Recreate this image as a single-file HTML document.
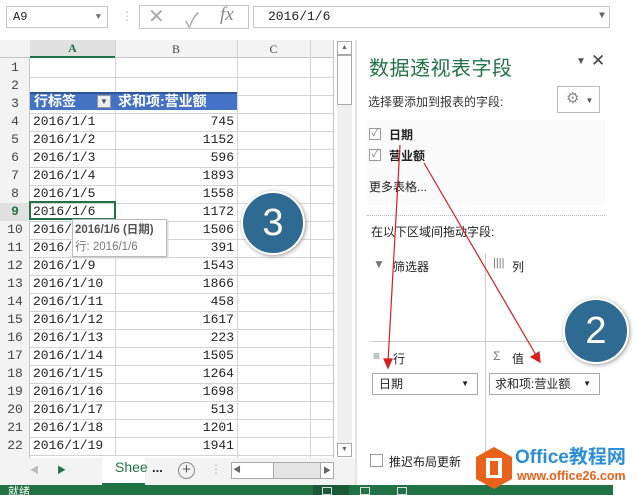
<!DOCTYPE html><html><head><meta charset="utf-8"><style>
*{margin:0;padding:0;box-sizing:border-box}
body{width:637px;height:495px;overflow:hidden;background:#fff;position:relative;font-family:"Liberation Sans","Noto Sans CJK SC",sans-serif;font-size:12px;color:#222}
.a{position:absolute;white-space:nowrap}
.cell{position:absolute;height:18px;line-height:18px;font-family:"Liberation Mono","Noto Sans CJK SC",monospace;font-size:13px;white-space:nowrap}
.hl{position:absolute;left:30px;width:303px;height:1px;background:#d4d4d4}
.vl{position:absolute;top:40px;width:1px;height:418px;background:#d4d4d4}
</style></head><body>
<div class="a" style="left:6px;top:6px;width:102px;height:22px;border:1px solid #c6c6c6;font-family:'Liberation Mono',monospace;font-size:12px;line-height:20px;padding-left:6px">A9<span style="position:absolute;right:6px;top:0;color:#777;font-size:9px">▼</span></div>
<div class="a" style="left:121px;top:9px;color:#bbb;font-size:12px">⋮</div>
<div class="a" style="left:139px;top:5px;width:110px;height:24px;border:1px solid #c6c6c6"></div>
<div class="a" style="left:148px;top:4px;color:#aaa;font-size:20px">✕</div>
<div class="a" style="left:185px;top:4px;color:#aaa;font-size:20px">✓</div>
<div class="a" style="left:220px;top:4px;color:#888;font-size:19px;font-style:italic;font-family:'Liberation Serif',serif">fx</div>
<div class="a" style="left:253px;top:6px;width:357px;height:22px;border:1px solid #c6c6c6;font-family:'Liberation Mono',monospace;font-size:13px;line-height:20px;padding-left:14px">2016/1/6<span style="position:absolute;right:4px;top:0;color:#666;font-size:10px">▼</span></div>
<div class="a" style="left:0;top:40px;width:333px;height:18px;background:#f3f3f3;border-bottom:1px solid #c6c6c6"></div>
<div class="a" style="left:30px;top:40px;width:85px;height:18px;background:#e1e1e1;border-bottom:2px solid #217346;text-align:center;line-height:17px;font-family:'Liberation Serif',serif;color:#217346;font-weight:bold">A</div>
<div class="a" style="left:115px;top:40px;width:122px;height:18px;text-align:center;line-height:18px;font-family:'Liberation Serif',serif;color:#444">B</div>
<div class="a" style="left:237px;top:40px;width:73px;height:18px;text-align:center;line-height:18px;font-family:'Liberation Serif',serif;color:#444">C</div>
<div class="a" style="left:0;top:58px;width:30px;height:400px;background:#f3f3f3;border-right:1px solid #c6c6c6"></div>
<div class="a" style="left:333px;top:40px;width:1px;height:418px;background:#c6c6c6"></div>
<div class="vl" style="left:115px"></div><div class="vl" style="left:237px"></div><div class="vl" style="left:310px"></div>
<div id="g"></div>
<div class="a" style="left:30px;top:92px;width:207px;height:18px;background:#4472c4;border-top:2px solid #2f5597"></div>
<div class="a" style="left:34px;top:92px;color:#fff;font-size:14px;font-weight:bold;line-height:18px">行标签</div>
<div class="a" style="left:97px;top:95px;width:14px;height:13px;background:#eee;border:1px solid #999;font-size:8px;text-align:center;line-height:11px;color:#555">▼</div>
<div class="a" style="left:118px;top:92px;color:#fff;font-size:14px;font-weight:bold;line-height:18px">求和项:营业额</div>
<div class="a" style="left:29px;top:201px;width:87px;height:19px;border:2px solid #217346"></div>
<div class="a" style="left:72px;top:219px;width:95px;height:38px;background:#fff;border:1px solid #bbb;box-shadow:1px 1px 2px #ccc;font-size:11.5px;padding:2px 0 0 2px;line-height:17px"><b style="color:#555">2016/1/6 (日期)</b><br><span style="color:#777">行: 2016/1/6</span></div>
<div class="a" style="left:241px;top:191px;width:64px;height:64px;border-radius:50%;background:#2e6a92;border:2px solid #fff;box-shadow:1px 1px 4px #999;color:#fff;font-size:38px;text-align:center;line-height:60px">3</div>
<div class="a" style="left:337px;top:41px;width:15px;height:402px;background:#f0f0f0"></div>
<div class="a" style="left:337px;top:41px;width:15px;height:14px;border:1px solid #aaa;background:#fff;font-size:7px;text-align:center;color:#666;line-height:12px">▲</div>
<div class="a" style="left:337px;top:55px;width:15px;height:50px;border:1px solid #aaa;background:#fff"></div>
<div class="a" style="left:337px;top:443px;width:15px;height:14px;border:1px solid #aaa;background:#fff;font-size:7px;text-align:center;color:#666;line-height:12px">▼</div>
<div class="a" style="left:0;top:458px;width:355px;height:27px;background:#f3f3f3"></div>
<div class="a" style="left:30px;top:463px;color:#bbb;font-size:9px">◀</div>
<div class="a" style="left:57px;top:463px;color:#217346;font-size:9px">▶</div>
<div class="a" style="left:102px;top:456px;width:43px;height:29px;background:#fff;border-bottom:2px solid #217346;color:#217346;font-size:14px;padding:3px 0 0 13px">Shee</div>
<div class="a" style="left:152px;top:460px;font-weight:bold;font-size:13px">...</div>
<div class="a" style="left:178px;top:462px;width:17px;height:17px;border:1px solid #888;border-radius:50%;text-align:center;line-height:14px;color:#555;font-size:15px">+</div>
<div class="a" style="left:210px;top:462px;color:#bbb">⋮</div>
<div class="a" style="left:231px;top:462px;width:43px;height:17px;background:#fff;border:1px solid #aaa"></div>
<div class="a" style="left:233px;top:464px;color:#666;font-size:8px">◀</div>
<div class="a" style="left:274px;top:462px;width:48px;height:17px;background:#e4e4e4;border-top:1px solid #aaa;border-bottom:1px solid #aaa"></div>
<div class="a" style="left:320px;top:462px;width:14px;height:17px;background:#fff;border:1px solid #aaa;color:#666;font-size:8px;text-align:center;line-height:15px">▶</div>
<div class="a" style="left:0;top:485px;width:613px;height:10px;background:#217346;overflow:hidden"><span style="position:absolute;left:8px;top:-2px;color:#fff;font-size:11px">就绪</span><div style="position:absolute;left:313px;top:0;width:36px;height:10px;background:#1a5a38"></div><div style="position:absolute;left:322px;top:2px;width:10px;height:8px;border:1px solid #ddd"></div><div style="position:absolute;left:360px;top:2px;width:10px;height:8px;border:1px solid #ddd"></div><div style="position:absolute;left:397px;top:2px;width:10px;height:8px;border:1px solid #ddd"></div></div>
<div class="a" style="left:355px;top:40px;width:2px;height:445px;background:#e4e4e4"></div>
<div class="a" style="left:369px;top:52px;color:#217346;font-size:20px;letter-spacing:0.5px">数据透视表字段</div>
<div class="a" style="left:576px;top:56px;color:#555;font-size:10px">▼</div>
<div class="a" style="left:591px;top:51px;color:#444;font-size:17px">✕</div>
<div class="a" style="left:368px;top:93px;color:#333;font-size:12px">选择要添加到报表的字段:</div>
<div class="a" style="left:557px;top:86px;width:43px;height:27px;border:1px solid #bbb;color:#888;font-size:15px;padding:2px 0 0 8px">⚙<span style="font-size:8px;color:#555;margin-left:6px">▼</span></div>
<div class="a" style="left:367px;top:120px;width:238px;height:85px;background:#fbfbfb"></div>
<div class="a" style="left:369px;top:128px;width:12px;height:12px;border:1px solid #999;background:#fff;color:#777;font-size:10px;line-height:10px;text-align:center">✓</div>
<div class="a" style="left:389px;top:126px;font-weight:bold;font-size:12px">日期</div>
<div class="a" style="left:369px;top:149px;width:12px;height:12px;border:1px solid #999;background:#fff;color:#777;font-size:10px;line-height:10px;text-align:center">✓</div>
<div class="a" style="left:389px;top:147px;font-weight:bold;font-size:12px">营业额</div>
<div class="a" style="left:369px;top:178px;font-size:12px">更多表格...</div>
<div class="a" style="left:367px;top:215px;width:238px;border-top:1px dotted #bbb"></div>
<div class="a" style="left:371px;top:223px;font-size:12px">在以下区域间拖动字段:</div>
<div class="a" style="left:485px;top:253px;width:1px;height:232px;background:#ccc"></div>
<div class="a" style="left:370px;top:341px;width:235px;height:1px;background:#ccc"></div>
<div class="a" style="left:373px;top:257px;color:#777;font-size:12px">▼</div>
<div class="a" style="left:393px;top:258px;font-size:12px">筛选器</div>
<div class="a" style="left:493px;top:257px;color:#777;font-size:11px">||||</div>
<div class="a" style="left:512px;top:258px;font-size:12px">列</div>
<div class="a" style="left:373px;top:349px;color:#777;font-size:12px">≡</div>
<div class="a" style="left:393px;top:350px;font-size:12px">行</div>
<div class="a" style="left:493px;top:349px;color:#777;font-size:12px">Σ</div>
<div class="a" style="left:512px;top:350px;font-size:12px">值</div>
<div class="a" style="left:372px;top:373px;width:106px;height:22px;border:1px solid #aaa;font-size:12px;line-height:20px;padding-left:6px">日期<span style="position:absolute;right:8px;font-size:8px">▼</span></div>
<div class="a" style="left:489px;top:373px;width:111px;height:22px;border:1px solid #aaa;font-size:12px;line-height:20px;padding-left:5px">求和项:营业额<span style="position:absolute;right:8px;font-size:8px">▼</span></div>
<div class="a" style="left:563px;top:298px;width:66px;height:66px;border-radius:50%;background:#2e6a92;border:2px solid #fff;box-shadow:1px 1px 4px #999;color:#fff;font-size:38px;text-align:center;line-height:62px">2</div>
<div class="a" style="left:370px;top:454px;width:13px;height:13px;border:1px solid #999"></div>
<div class="a" style="left:389px;top:453px;font-size:12px">推迟布局更新</div>
<svg class="a" style="left:0;top:0" width="637" height="495"><g stroke="#d81e1e" stroke-width="1.2" fill="#d81e1e">
<line x1="400" y1="145" x2="388" y2="362"/><polygon points="384,359 392,359 388,368"/>
<line x1="424" y1="163" x2="536" y2="355"/><polygon points="531,357 539,352 540,362"/></g></svg>
<svg class="a" style="left:474px;top:446px" width="40" height="44"><polygon points="20,1 38,11 38,33 20,43 2,33 2,11" fill="#e8621c"/><rect x="12" y="12" width="16" height="20" fill="#fff"/><rect x="16" y="15" width="8" height="14" fill="#e8621c"/></svg>
<div class="a" style="left:515px;top:446px;color:#2b8fd8;font-size:19px;font-weight:bold;line-height:24px">Office教程网</div>
<div class="a" style="left:517px;top:469px;color:#e8621c;font-size:12.5px;font-weight:bold">www.office26.com</div>
<script>
var d=["","","","2016/1/1|745","2016/1/2|1152","2016/1/3|596","2016/1/4|1893","2016/1/5|1558","2016/1/6|1172","2016/1/7|1506","2016/1/8|391","2016/1/9|1543","2016/1/10|1866","2016/1/11|458","2016/1/12|1617","2016/1/13|223","2016/1/14|1505","2016/1/15|1264","2016/1/16|1698","2016/1/17|513","2016/1/18|1201","2016/1/19|1941"];
var h="";for(var i=0;i<22;i++){var t=58.5+i*18;
h+='<div class="hl" style="top:'+(t+18)+'px"></div>';
h+='<div class="cell" style="left:0;width:30px;text-align:center;top:'+t+'px;'+(i==8?'color:#217346;font-weight:bold;background:#e1e1e1':'color:#444')+'">'+(i+1)+'</div>';
if(d[i]){var p=d[i].split("|");h+='<div class="cell" style="left:33px;top:'+t+'px">'+p[0]+'</div><div class="cell" style="left:115px;width:119px;text-align:right;top:'+t+'px">'+p[1]+'</div>';}}
document.getElementById("g").innerHTML=h;
</script>
</body></html>
